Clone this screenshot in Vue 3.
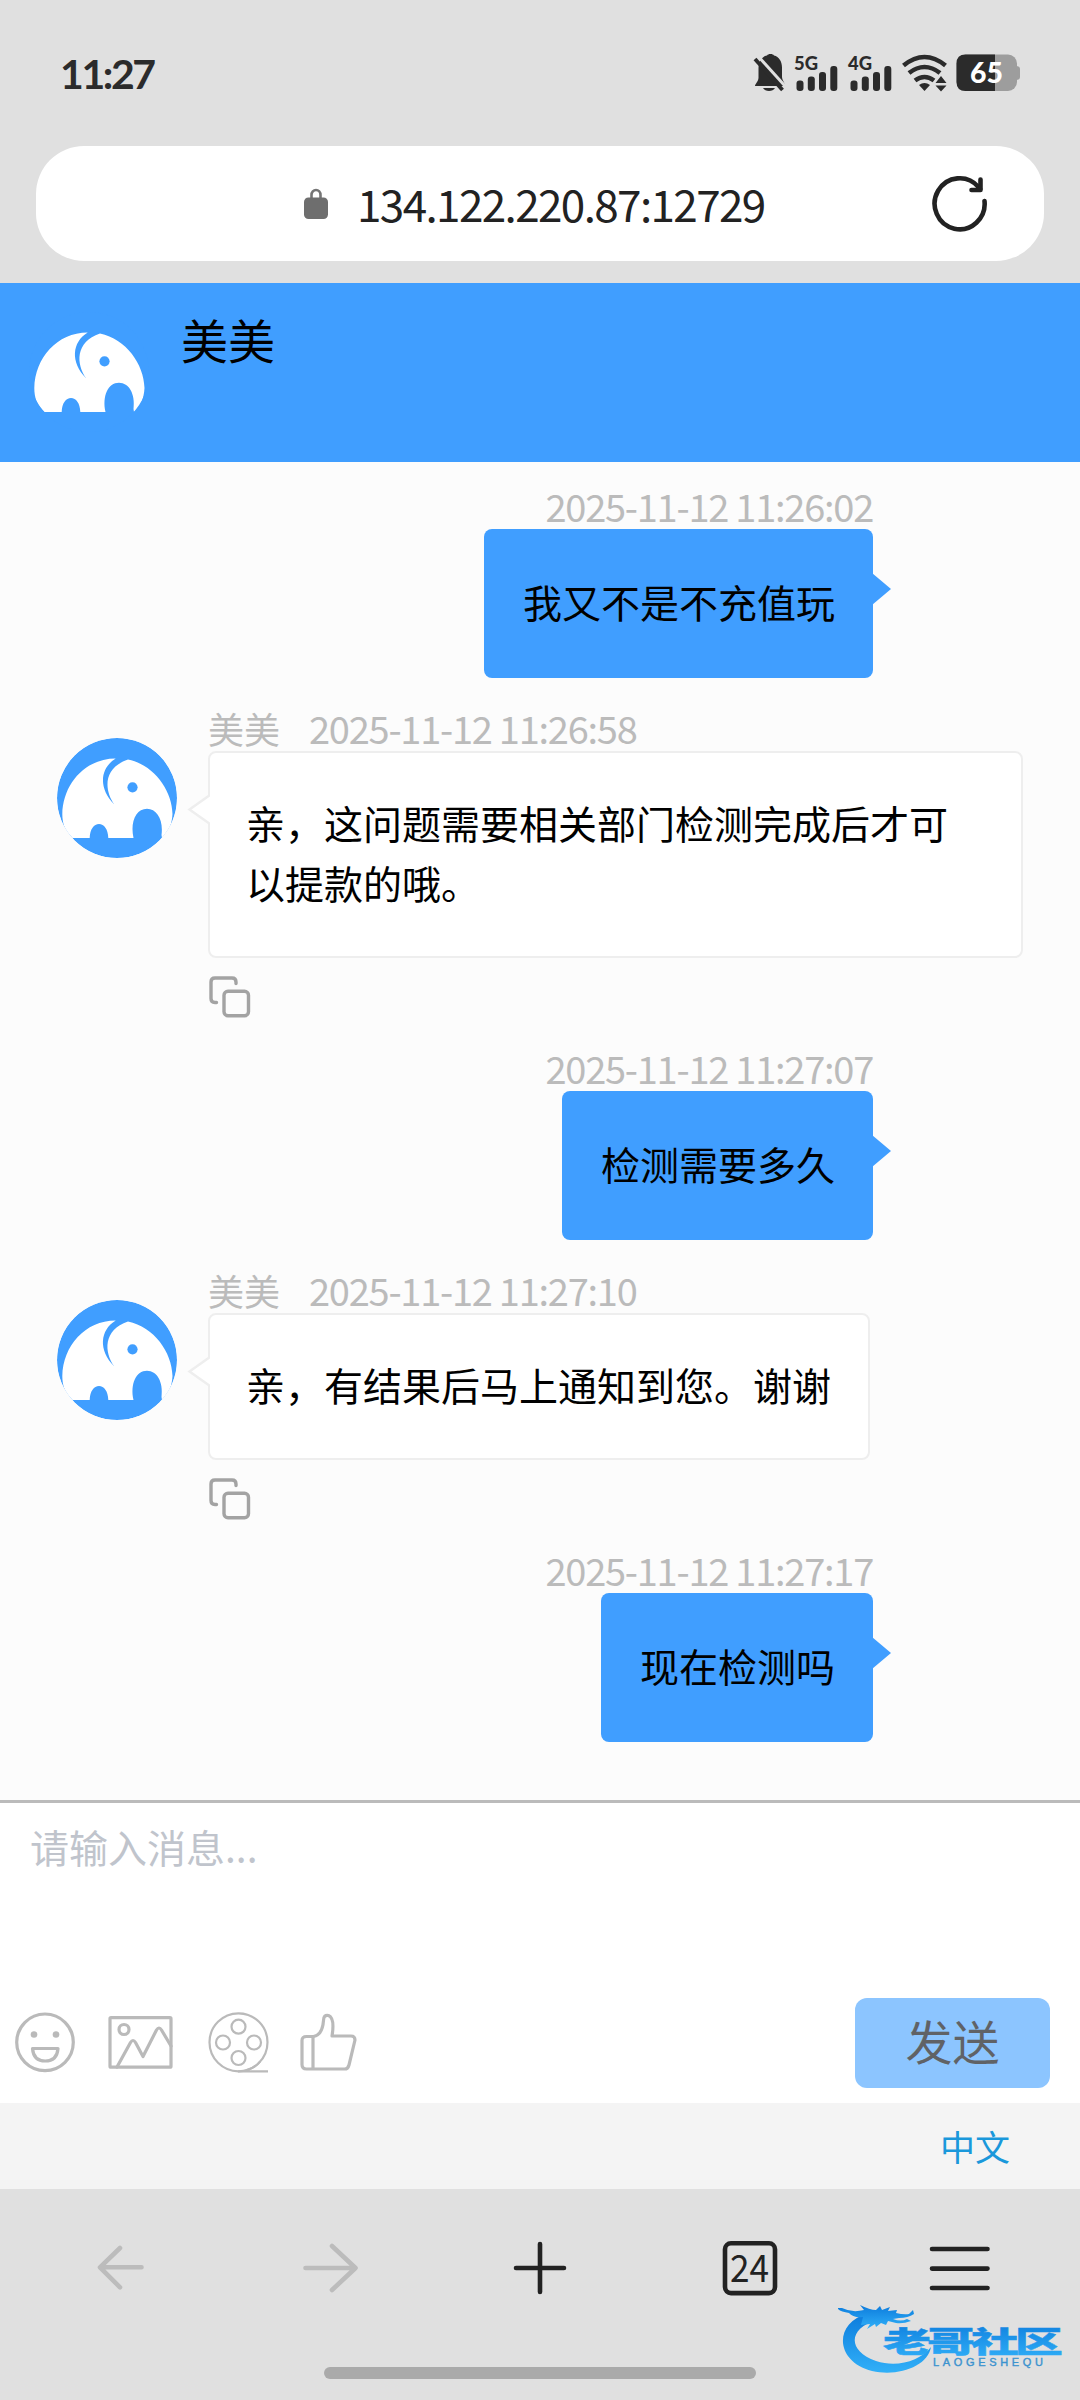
<template>
  <div class="screen">
    <div class="status">
      <span class="clock">11:27</span>
      <svg class="status-icons" width="270" height="44" viewBox="750 50 270 44">
        <path d="M755 86c0-2 3-4 3.500-8v-9c0-9 5-13 8.500-13.500 1-2 6-2 7 0 5 1 8 6 8 12v9c0 4 3 6 3 9.500z" fill="#2b2b2b" />
        <path d="M763 88h12c-2 4-10 4-12 0z" fill="#2b2b2b" />
        <path d="M757.500 55.500l28 31" stroke="#e0e0e0" stroke-width="3" />
        <path d="M755 59l27.500 31" stroke="#2b2b2b" stroke-width="3.800" />
        <text x="794" y="69.500" textLength="24" lengthAdjust="spacingAndGlyphs">5G</text>
        <text x="848" y="69.500" textLength="24" lengthAdjust="spacingAndGlyphs">4G</text>
        <g v-for="x in [796.500, 850.500]" :key="x" fill="#2b2b2b">
          <rect :x="x" y="80.500" width="7" height="10.500" rx="3" />
          <rect :x="x + 11.300" y="76.500" width="7" height="14.500" rx="3" />
          <rect :x="x + 22.500" y="72" width="7" height="19" rx="3" />
          <rect :x="x + 33.800" y="66" width="7" height="25" rx="3" />
        </g>
        <g fill="none" stroke="#2b2b2b" stroke-width="4.600">
          <path d="M903.500 65.500q21-17 42 0M909 73q15.500-12 31 0M915 80.500q9.500-7 19 0" />
        </g>
        <path d="M919 85q5.500-4 11 0l-5.500 6z" fill="#2b2b2b" />
        <path d="M935.500 83h11l-5.500-7zM935.500 85.500h11l-5.500 6z" fill="#2b2b2b" />
        <rect x="956.500" y="54.500" width="60.500" height="36.500" rx="9" fill="#9d9d9d" />
        <path d="M1016 66q4 0 4 3v8q0 3-4 3z" fill="#9d9d9d" />
        <path d="M995 54.500h-29.500q-9 0-9 9v18.500q0 9 9 9h29.500z" fill="#2b2b2b" />
        <text class="battery" x="970" y="83" textLength="33" lengthAdjust="spacingAndGlyphs">65</text>
      </svg>
    </div>

    <div class="address">
      <svg class="lock" width="24" height="31" viewBox="0 0 24 31">
        <path d="M7.500 12V7a4.500 5 0 0 1 9 0v5" fill="none" stroke="#757575" stroke-width="2.600" />
        <rect y="9.500" width="24" height="21.500" rx="4.500" fill="#6e6e6e" />
      </svg>
      <span class="url">134.122.220.87:12729</span>
      <svg class="reload" width="56" height="58" viewBox="932 175 56 58">
        <g fill="none" stroke="#222" stroke-width="4.600" stroke-linecap="round" stroke-linejoin="round">
          <path d="M984.500 201a25 25.500 0 1 1-6-14l1.500 2" />
          <path d="M980.500 179.500v10.500h-9" />
        </g>
      </svg>
    </div>

    <div class="header">
      <svg class="avatar" viewBox="0 0 120 120"><use href="#elephant" /></svg>
      <p class="title">美美</p>
    </div>

    <div class="chat">
      <div v-for="msg in messages" :key="msg.time" class="message" :class="{ mine: msg.mine }">
        <svg v-if="!msg.mine" class="avatar" viewBox="0 0 120 120"><use href="#elephant" /></svg>
        <div class="body">
          <p class="meta">
            <span v-if="!msg.mine" class="name">美美</span>
            <span class="time">{{ msg.time }}</span>
          </p>
          <div class="bubble">
            {{ msg.text }}
            <svg v-if="!msg.mine" class="tail" width="23" height="32" viewBox="0 0 23 32">
              <path d="M23 1L2.500 15.500L23 30" fill="#fff" stroke="#eee" stroke-width="2.500" />
            </svg>
            <svg v-else class="tail" width="19" height="32" viewBox="0 0 19 32">
              <path d="M0 0l19 16-19 16z" fill="#409eff" />
            </svg>
          </div>
          <svg v-if="!msg.mine" class="copy" width="42" height="42" viewBox="0 0 42 42">
            <g fill="none" stroke="#a3a3a3" stroke-width="3.400" stroke-linecap="round">
              <path d="M7.500 26.500H6q-4 0-4-4V6q0-4 4-4h17q4 0 4 4v1.500" />
              <rect x="15" y="15.300" width="24.500" height="24.500" rx="4" />
            </g>
          </svg>
        </div>
      </div>
    </div>

    <div class="editor">
      <textarea v-model="draft" placeholder="请输入消息..."></textarea>
      <div class="toolbar">
        <svg width="360" height="64" viewBox="0 2011 360 64">
          <g fill="none" stroke="#bababa" stroke-width="3.200" stroke-linejoin="round" stroke-linecap="round">
            <circle cx="45" cy="2042.300" r="28.300" />
            <path d="M32.500 2048.500h25.500q-1 12.500-12.750 12.500t-12.750-12.500z" />
            <rect x="110" y="2017.700" width="61" height="49.500" rx="1" />
            <circle cx="124" cy="2029.500" r="5" />
            <path d="M117 2067l13.500-24.500q2.500-4 5 0l7.500 14 13.500-26.500q2.500-4 5 0l9.500 16" />
            <path d="M313.500 2036.500h-7q-4.500 0-4.500 4v24q0 4.500 4.500 4.500h38q3.500 0 4.500-4l6-25q0-4-4-4h-19q3-18-3.500-20.500-5-1-5 5-1 14.500-10 16z" />
            <path d="M313 2036.500v32" />
          </g>
          <circle cx="34" cy="2034.500" r="3.300" fill="#bababa" />
          <circle cx="56" cy="2034.500" r="3.300" fill="#bababa" />
          <g fill="none" stroke="#bababa" stroke-width="2.200">
            <circle cx="238.500" cy="2042.300" r="29" />
            <circle cx="238.500" cy="2026.700" r="7" />
            <circle cx="238.500" cy="2058" r="7" />
            <circle cx="223" cy="2042.500" r="7" />
            <circle cx="254" cy="2042.500" r="7" />
            <path d="M238 2071.300h30M246 2070.500q10-3 14-9" />
          </g>
        </svg>
        <button class="send">发送</button>
      </div>
    </div>

    <div class="footer">
      <span>中文</span>
    </div>

    <div class="nav">
      <svg width="1080" height="70" viewBox="0 2233 1080 70">
        <g fill="none" stroke-width="4.600" stroke-linecap="round" stroke-linejoin="round">
          <path d="M141.500 2267.300H101M120 2248l-20 19.300 20 20" stroke="#bcbcbc" />
          <path d="M305.500 2268H354M332 2246l23.500 22-23.500 22" stroke="#bcbcbc" />
          <path d="M516 2268h48M540 2244v48M932 2249h55.500M932 2268.600h55.500M932 2288h55.500" stroke="#222" />
          <rect x="725" y="2243.300" width="50" height="49.800" rx="6" stroke="#222" />
        </g>
        <text x="730" y="2281.500" textLength="39" lengthAdjust="spacingAndGlyphs">24</text>
      </svg>
      <div class="home"></div>
    </div>

    <svg class="watermark" width="230" height="80" viewBox="838 2300 230 80">
      <defs>
        <linearGradient id="wave" x1="0" y1="0" x2="0" y2="1">
          <stop offset="0" stop-color="#0c7bdc" />
          <stop offset="1" stop-color="#31b0f8" />
        </linearGradient>
      </defs>
      <g fill="url(#wave)">
        <path d="M868 2313C832 2324 836 2362 872 2371C899 2377 928 2366 931 2347C920 2361 897 2368 876 2361C846 2350 849 2328 877 2320z" />
        <path d="M842 2308q10 5 22 2l-4-5q10 5 16 5l4-4 2 4 8-3-2 4 9-1-1 3q8 2 13 1l4-4 1 4q-6 4-15 4l-6 1q8 3 14 0l4 2q-8 3-15 2l-8-2-2 4-5-2-5 4-1-3-8 5 3-5-9 1 2-8q-10 1-14-4-9-1-12-5z" />
      </g>
      <g transform="translate(883 2352.500) scale(1.650 1)">
        <text class="brand" x="0" y="0" textLength="109" fill="url(#wave)" stroke="url(#wave)">老哥社区</text>
      </g>
      <text class="latin" x="933" y="2366" textLength="110">LAOGESHEQU</text>
    </svg>

    <!-- shared avatar artwork -->
    <svg class="defs" width="0" height="0">
      <defs>
        <clipPath id="round"><circle cx="60" cy="60" r="60" /></clipPath>
        <g id="elephant" clip-path="url(#round)">
          <circle cx="60" cy="60" r="60" fill="#409eff" />
          <path
            d="M15.500 100C8 93 5.300 86 5.300 76C6 46 28 20.500 58.700 20.500C43 30 41 50 57.300 66.500C47 52 46 30 71 21.500C97 27 115 52 115.500 76C115 87 111 96 105 100L104.500 97C106.500 82 100 70.700 90 70.700C79 70.700 73 84 76.500 100H51.300C51 91 47 86 42 86S33 91 32.700 100z"
            fill="#fff"
          />
          <circle cx="75.500" cy="49.300" r="5.100" fill="#409eff" />
        </g>
      </defs>
    </svg>
  </div>
</template>

<script setup>
  import { ref } from 'vue';

  const draft = ref('');

  const messages = [
    { mine: true, time: '2025-11-12 11:26:02', text: '我又不是不充值玩' },
    { mine: false, time: '2025-11-12 11:26:58', text: '亲，这问题需要相关部门检测完成后才可以提款的哦。' },
    { mine: true, time: '2025-11-12 11:27:07', text: '检测需要多久' },
    { mine: false, time: '2025-11-12 11:27:10', text: '亲，有结果后马上通知到您。谢谢' },
    { mine: true, time: '2025-11-12 11:27:17', text: '现在检测吗' }
  ];
</script>

<style>
  body {
    margin: 0;
  }
</style>

<style scoped>
  .screen {
    position: relative;
    width: 1080px;
    height: 2400px;
    overflow: hidden;
    background: #e0e0e0;
    font-family: "Noto Sans CJK SC", sans-serif;
    color: #000;
  }

  p {
    margin: 0;
  }

  svg {
    flex: none;
    display: block;
  }

  .status {
    height: 146px;
    box-sizing: border-box;
    padding: 50px 60px 0 60px;
    display: flex;
    justify-content: space-between;
  }

  .clock {
    font-family: Lato, sans-serif;
    font-size: 41px;
    font-weight: 700;
    line-height: 47px;
    letter-spacing: -2.4px;
    color: #2b2b2b;
  }

  .status-icons text {
    font-family: Lato, sans-serif;
    font-size: 18px;
    font-weight: 900;
    fill: #2b2b2b;
  }

  .status-icons .battery {
    font-size: 28px;
    fill: #fff;
  }

  .address {
    height: 115px;
    margin: 0 36px;
    border-radius: 48px;
    background: #fff;
    display: flex;
    align-items: center;
  }

  .lock {
    margin-left: 268px;
    margin-bottom: 1px;
  }

  .url {
    width: 410px;
    margin-left: 29px;
    margin-top: -2px;
    font-size: 44px;
    letter-spacing: -1.6px;
    white-space: nowrap;
    color: #222;
  }

  .reload {
    margin-left: 165px;
  }

  .header {
    height: 179px;
    margin-top: 22px;
    box-sizing: border-box;
    padding: 29px;
    display: flex;
    background: #409eff;
  }

  .avatar {
    width: 120px;
    height: 120px;
  }

  .title {
    margin-left: 32px;
    margin-top: -8px;
    font-size: 47px;
    line-height: 70px;
  }

  .chat {
    height: 1338px;
    box-sizing: border-box;
    padding: 23px 57px 0;
    background: #fcfcfc;
    display: flex;
    flex-direction: column;
    gap: 29px;
  }

  .message {
    display: flex;
    gap: 31px;
  }

  .message .avatar {
    margin-top: 31px;
  }

  .mine {
    justify-content: flex-end;
    padding-right: 150px;
  }

  .body {
    display: flex;
    flex-direction: column;
    align-items: flex-start;
  }

  .mine .body {
    align-items: flex-end;
  }

  .meta {
    height: 44px;
    display: flex;
    gap: 29px;
    font-size: 36px;
    line-height: 42px;
    color: #bbb;
    white-space: nowrap;
  }

  .time {
    font-size: 38px;
    letter-spacing: -1.25px;
  }

  .bubble {
    position: relative;
    box-sizing: border-box;
    border: 2px solid #eee;
    border-radius: 8px;
    padding: 39px 37px 44px 36px;
    background: #fff;
    font-size: 39px;
    line-height: 60px;
  }

  .mine .bubble {
    border: none;
    padding: 42px 38px 47px 39px;
    background: #409eff;
  }

  .tail {
    position: absolute;
    left: -23px;
    top: 41px;
  }

  .mine .tail {
    left: auto;
    right: -18px;
    top: 44px;
  }

  .copy {
    margin-top: 18px;
    margin-left: 1px;
  }

  .editor {
    height: 303px;
    box-sizing: border-box;
    border-top: 3px solid #bbb;
    background: #fff;
    display: flex;
    flex-direction: column;
  }

  textarea {
    flex: 1;
    border: none;
    outline: none;
    resize: none;
    padding: 13px 30px;
    background: none;
    font-family: "Noto Sans CJK SC", sans-serif;
    font-size: 39px;
    line-height: 60px;
  }

  textarea::placeholder {
    color: #c0c4cc;
  }

  .toolbar {
    height: 90px;
    padding-right: 30px;
    margin-bottom: 15px;
    display: flex;
    align-items: center;
    justify-content: space-between;
  }

  .send {
    width: 195px;
    height: 90px;
    padding: 0 0 6px;
    border: none;
    border-radius: 12px;
    background: #8cc5ff;
    color: #606266;
    font-family: "Noto Sans CJK SC", sans-serif;
    font-size: 47px;
    line-height: 84px;
  }

  .footer {
    height: 86px;
    padding-right: 70px;
    display: flex;
    justify-content: flex-end;
    background: #f4f4f4;
    color: #1a98db;
    font-size: 35px;
    line-height: 85px;
  }

  .nav {
    padding-top: 44px;
    display: flex;
    flex-direction: column;
    align-items: center;
  }

  .nav text {
    font-size: 38px;
    fill: #222;
  }

  .home {
    width: 432px;
    height: 12px;
    margin-top: 64px;
    border-radius: 6px;
    background: #aaa;
  }

  .watermark {
    position: absolute;
    left: 838px;
    top: 2300px;
  }

  .brand {
    font-size: 29px;
    font-weight: 900;
    stroke-width: 0.5;
  }

  .latin {
    font-family: "Liberation Sans", sans-serif;
    font-size: 11px;
    fill: #3c93cf;
    stroke: #3c93cf;
    stroke-width: 0.4;
  }

  .defs {
    position: absolute;
  }
</style>
